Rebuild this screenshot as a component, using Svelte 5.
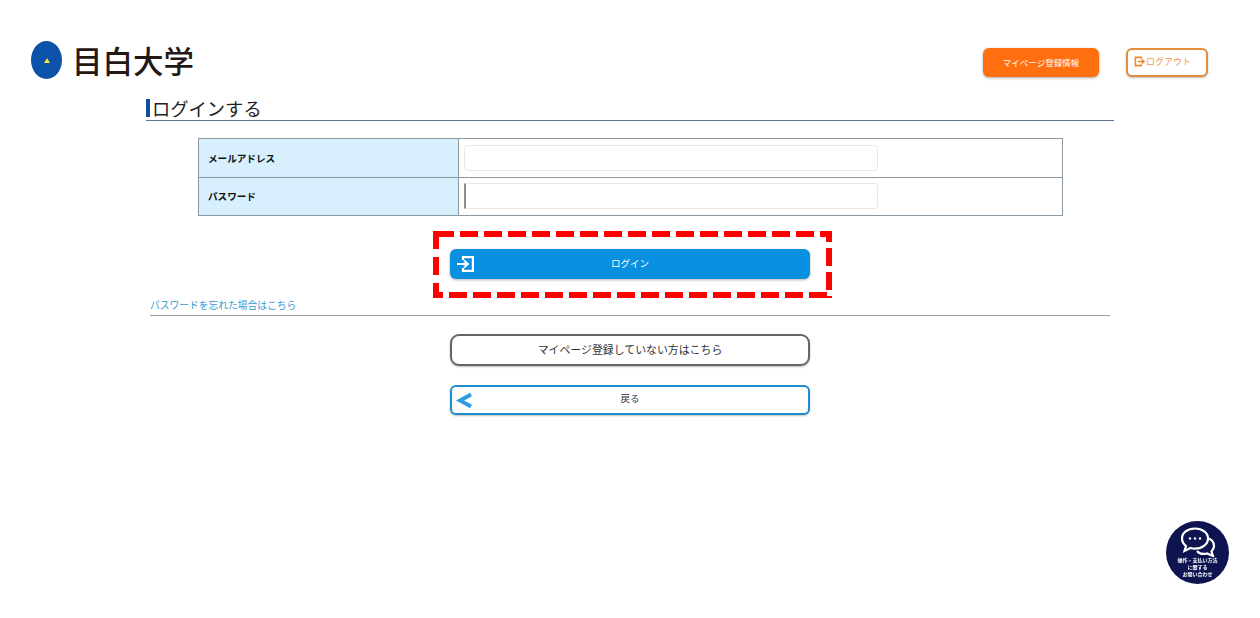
<script lang="ts">
  const fields = [
    { label: "メールアドレス", type: "text", caret: false },
    { label: "パスワード", type: "password", caret: true },
  ];
</script>

<div class="page">
  <header class="top">
    <div class="logo">
      <span class="mark"><i></i></span>
      <span class="logo-text">目白大学</span>
    </div>
    <div class="top-actions">
      <button class="btn-mypage">マイページ登録情報</button>
      <button class="btn-logout">
        <svg width="11" height="11" viewBox="0 0 12 12" fill="none" stroke="#ee8a2c" stroke-width="1.7">
          <path d="M8 3V1.500H1.500v9H8V9" />
          <path d="M4 6h7M8.500 3.800 11 6 8.500 8.200" />
        </svg>
        ログアウト
      </button>
    </div>
  </header>

  <main class="content">
    <h1 class="title">ログインする</h1>

    <table class="form">
      <tbody>
        {#each fields as f}
          <tr>
            <th>{f.label}</th>
            <td>
              <div class="input" class:caret={f.caret}></div>
            </td>
          </tr>
        {/each}
      </tbody>
    </table>

    <div class="highlight">
      <button class="btn-login">
        <svg class="login-icon" width="17" height="16" viewBox="0 0 17 16" fill="none" stroke="#fff" stroke-width="2.200">
          <path d="M6 4V1.100h9.900v13.800H6V12" />
          <path d="M0 8h10.500M7 4.500 10.800 8 7 11.500" />
        </svg>
        <span class="btn-label">ログイン</span>
      </button>
    </div>

    <div class="forgot"><a href="#top">パスワードを忘れた場合はこちら</a></div>

    <div class="sub-actions">
      <button class="btn-register"><span class="btn-label">マイページ登録していない方はこちら</span></button>
      <button class="btn-back">
        <svg class="back-icon" width="17" height="17" viewBox="0 0 17 17" fill="none" stroke="#2f9be6" stroke-width="4">
          <path d="M15 2.500 4 8.500l11 6" />
        </svg>
        <span class="btn-label">戻る</span>
      </button>
    </div>
  </main>

  <button class="chat" aria-label="お問い合わせ">
    <svg width="36" height="30" viewBox="0 0 36 30" fill="none" stroke="#fff" stroke-width="2.200">
      <path d="M27 11c4 1 7 4 7 8 0 2-1 4-2.500 5.500L33 29l-6-2.500c-4 1-8 0-10-2.500" fill="#0e1450" />
      <path d="M15 1.500C7.500 1.500 2 6 2 11.500c0 3 1.500 5.500 4 7.500l-1.500 5 6-3c1.500.5 3 .7 4.500.7 7.500 0 13-4.700 13-10.200S22.500 1.500 15 1.500Z" fill="#0e1450" />
      <circle cx="10" cy="11.500" r="1.200" fill="#fff" stroke="none" />
      <circle cx="15" cy="11.500" r="1.200" fill="#fff" stroke="none" />
      <circle cx="20" cy="11.500" r="1.200" fill="#fff" stroke="none" />
    </svg>
    <span class="chat-text">操作・支払い方法<br />に関する<br />お問い合わせ</span>
  </button>
</div>

<style>
  :global(body) {
    margin: 0;
    background: #fff;
    font-family: "Noto Sans CJK JP", "Liberation Sans", sans-serif;
  }

  .page {
    height: 618px;
    overflow: hidden;
  }

  button {
    font-family: inherit;
    cursor: pointer;
    padding: 0;
  }

  .top {
    display: flex;
    justify-content: space-between;
    align-items: flex-start;
    padding: 41px 52px 0 31px;
    height: 58px;
  }

  .logo {
    display: flex;
    align-items: center;
    gap: 10px;
  }

  .mark {
    width: 31px;
    height: 38px;
    border-radius: 50%;
    background: #0b52a8;
    display: flex;
    align-items: center;
    justify-content: center;
  }

  .mark i {
    width: 0;
    height: 0;
    border-left: 3px solid transparent;
    border-right: 3px solid transparent;
    border-bottom: 5px solid #f4e34a;
  }

  .logo-text {
    font-size: 30.500px;
    line-height: 38px;
    font-weight: 500;
    color: #231815;
  }

  .top-actions {
    display: flex;
    gap: 27px;
    padding-top: 7px;
  }

  .btn-mypage {
    width: 116px;
    height: 29px;
    border: none;
    border-radius: 6px;
    background: #ff6f0f;
    color: #fff;
    font-size: 8.500px;
    padding-bottom: 2px;
    box-shadow: 0 1px 3px rgba(0, 0, 0, 0.35);
  }

  .btn-logout {
    width: 82px;
    height: 29px;
    border: 2px solid #e58b3d;
    border-radius: 6px;
    background: #fff;
    color: #ee9a50;
    font-size: 9px;
    display: flex;
    align-items: center;
    padding: 0 0 2px 6px;
    gap: 1px;
    box-shadow: 0 1px 2px rgba(0, 0, 0, 0.25);
  }

  .content {
    width: 968px;
    margin-left: 146px;
  }

  .title {
    margin: 0;
    height: 21px;
    border-bottom: 1px solid #5b7590;
    font-size: 18.300px;
    line-height: 19px;
    font-weight: 400;
    color: #222;
    display: flex;
    align-items: flex-start;
    gap: 2.500px;
  }

  .title::before {
    content: "";
    width: 3.500px;
    height: 18px;
    background: #0b4f9e;
  }

  .form {
    width: 865px;
    margin: 17px 0 0 52px;
    border-collapse: collapse;
  }

  .form th,
  .form td {
    border: 1px solid #8a98a3;
    height: 38px;
    padding: 0;
  }

  .form tr:last-child th,
  .form tr:last-child td {
    height: 37px;
  }

  .form th {
    width: 260px;
    background: #d8f0fd;
    text-align: left;
    padding-left: 9px;
    font-size: 9.600px;
    font-weight: 700;
    color: #111;
    box-sizing: border-box;
  }

  .form tr:last-child th {
    padding-bottom: 2px;
  }

  .form td {
    padding-left: 5px;
  }

  .input {
    width: 414px;
    height: 26px;
    box-sizing: border-box;
    border: 1px solid #e8e8e8;
    border-radius: 4px;
    background: #fff;
  }

  .input.caret {
    margin-top: -1px;
    border-left: 2px solid #8e8e8e;
    border-radius: 0 4px 4px 0;
  }

  /* annotation box: a CSS dashed border can't set the dash length */
  .highlight {
    width: 399px;
    height: 67px;
    box-sizing: border-box;
    margin: 15px 0 0 287px;
    padding: 18px 0 0 17px;
    background:
      linear-gradient(90deg, #f00 18px, transparent 18px) 3px 0 / 24px 6px repeat-x,
      linear-gradient(90deg, #f00 18px, transparent 18px) 16px 100% / 24px 6px repeat-x,
      linear-gradient(#f00 18px, transparent 18px) 0 0 / 6px 26px repeat-y,
      linear-gradient(#f00 18px, transparent 18px) 100% -7px / 6px 24px repeat-y;
  }

  .btn-login {
    position: relative;
    display: block;
    width: 360px;
    height: 30px;
    border: none;
    border-radius: 6px;
    background: #0a90e0;
    color: #fff;
    font-size: 9.500px;
    box-shadow: 0 1px 3px rgba(0, 0, 0, 0.3);
  }

  .btn-label {
    position: relative;
    top: -1px;
  }

  .login-icon {
    position: absolute;
    left: 7px;
    top: 7px;
  }

  .forgot {
    margin: 0 4px;
    height: 17px;
    border-bottom: 1px solid #9aa3a8;
    font-size: 9.750px;
    line-height: 15px;
  }

  .forgot a {
    color: #3a9bd0;
    text-decoration: none;
  }

  .sub-actions {
    display: flex;
    flex-direction: column;
    gap: 19px;
    margin: 18px 0 0 304px;
    width: 360px;
  }

  .btn-register {
    height: 32px;
    border: 2px solid #666;
    border-radius: 9px;
    background: #fff;
    color: #333;
    font-size: 10.900px;
    box-shadow: 0 1px 2px rgba(0, 0, 0, 0.25);
  }

  .btn-back {
    position: relative;
    height: 30px;
    border: 2px solid #1d8fd1;
    border-radius: 6px;
    background: #fff;
    color: #333;
    font-size: 9.500px;
    padding-bottom: 2px;
    box-shadow: 0 1px 2px rgba(0, 0, 0, 0.25);
  }

  .back-icon {
    position: absolute;
    left: 4px;
    top: 5px;
  }

  .chat {
    position: fixed;
    left: 1166px;
    top: 521px;
    width: 63px;
    height: 63px;
    border: none;
    border-radius: 50%;
    background: #0e1450;
    color: #fff;
    display: flex;
    flex-direction: column;
    align-items: center;
    padding-top: 6px;
    box-sizing: border-box;
  }

  .chat-text {
    font-size: 5px;
    line-height: 7px;
    font-weight: 700;
    margin-top: -1px;
    text-align: center;
    white-space: nowrap;
  }
</style>
